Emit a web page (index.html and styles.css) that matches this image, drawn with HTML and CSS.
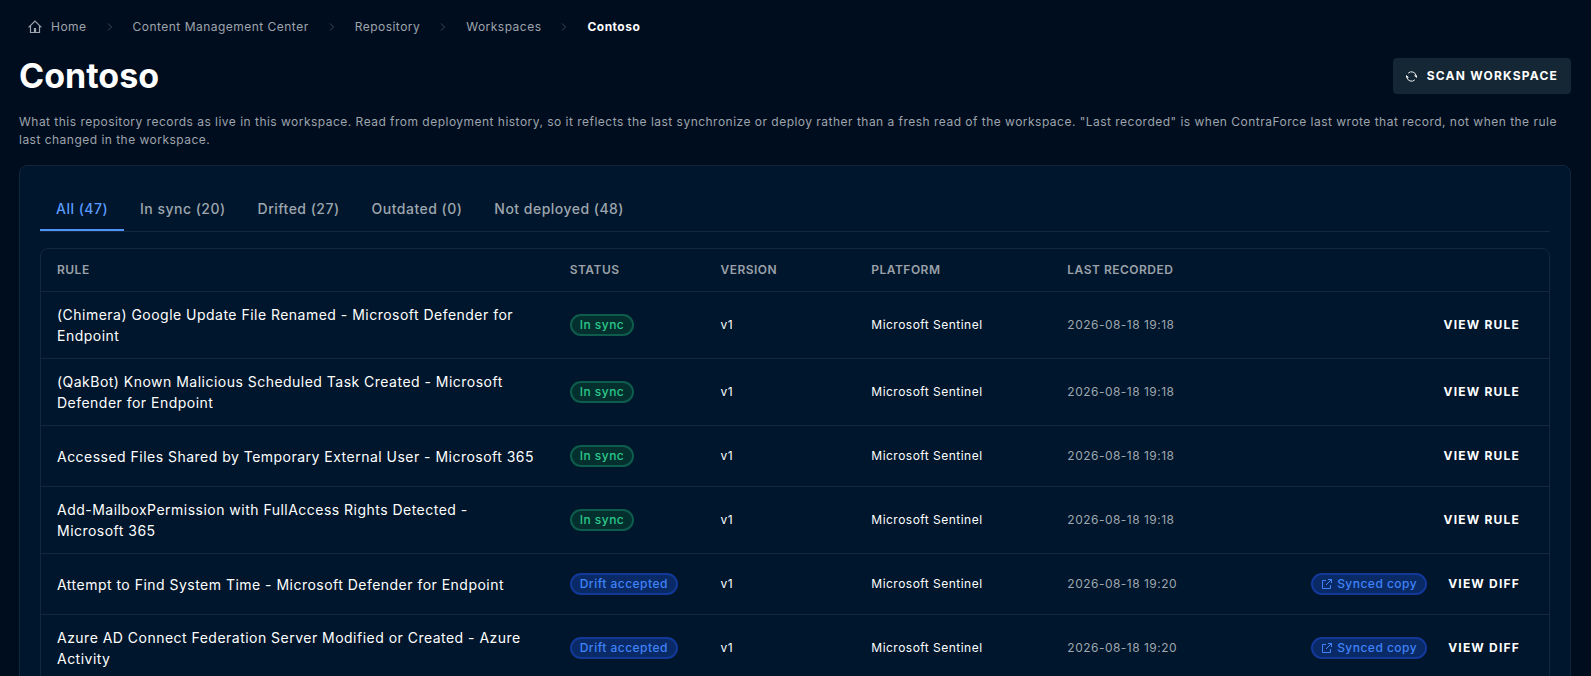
FILE: index.html
```html
<!DOCTYPE html>
<html lang="en">
<head>
    <title>Contoso</title>
    <meta charset="utf-8">
    <link rel="stylesheet" href="styles.css">
</head>
<body>
    <!-- Shared icons -->
    <svg class="sprite" aria-hidden="true">
        <symbol id="chevron" viewBox="0 0 8 10">
            <path d="M2 1.5L5.5 5L2 8.5"/>
        </symbol>
        <symbol id="open" viewBox="0 0 12 12">
            <path d="M5 2.5H1.5V10.5H9.5V7M7 1.5H10.5V5M10.5 1.5L5 7"/>
        </symbol>
    </svg>

    <nav class="breadcrumb" aria-label="Breadcrumb">
        <a href="#" class="home">
            <svg class="home-icon" viewBox="0 0 14 14"><path d="M0.6 7.4L7 1L13.4 7.4M2.5 5.8V12.5H11.5V5.8M6.5 12.5V8.5H7.5V12.5"/></svg>
            Home
        </a>
        <svg class="chevron"><use href="#chevron"/></svg>
        <a href="#">Content Management Center</a>
        <svg class="chevron"><use href="#chevron"/></svg>
        <a href="#">Repository</a>
        <svg class="chevron"><use href="#chevron"/></svg>
        <a href="#">Workspaces</a>
        <svg class="chevron"><use href="#chevron"/></svg>
        <span class="current">Contoso</span>
    </nav>

    <header class="page-head">
        <h1>Contoso</h1>
        <button type="button" class="scan">
            <svg class="scan-icon" viewBox="0 0 12 12">
                <path d="M2.4 2.4A5 5 0 0 1 11 5.6M9.6 9.6A5 5 0 0 1 1 6.4"/>
                <path class="solid" d="M8.6 5H12V7.6ZM3.4 7H0V4.4Z"/>
            </svg>
            SCAN WORKSPACE
        </button>
    </header>

    <p class="intro">What this repository records as live in this workspace. Read from deployment history, so it reflects the last synchronize or deploy rather than a fresh read of the workspace. "Last recorded" is when ContraForce last wrote that record, not when the rule last changed in the workspace.</p>

    <main class="card">
        <div class="tabs" role="tablist">
            <button type="button" class="tab active" role="tab" aria-selected="true">All (47)</button>
            <button type="button" class="tab" role="tab">In sync (20)</button>
            <button type="button" class="tab" role="tab">Drifted (27)</button>
            <button type="button" class="tab" role="tab">Outdated (0)</button>
            <button type="button" class="tab" role="tab">Not deployed (48)</button>
        </div>

        <div class="table-wrap">
            <table>
                <thead>
                    <tr>
                        <th class="col-rule">RULE</th>
                        <th class="col-status">STATUS</th>
                        <th class="col-version">VERSION</th>
                        <th class="col-platform">PLATFORM</th>
                        <th class="col-date">LAST RECORDED</th>
                        <th></th>
                    </tr>
                </thead>
                <tbody>
                    <tr>
                        <td class="rule">(Chimera) Google Update File Renamed - Microsoft Defender for Endpoint</td>
                        <td><span class="badge green">In sync</span></td>
                        <td>v1</td>
                        <td>Microsoft Sentinel</td>
                        <td class="date">2026-08-18 19:18</td>
                        <td><div class="actions"><button type="button" class="view">VIEW RULE</button></div></td>
                    </tr>
                    <tr>
                        <td class="rule">(QakBot) Known Malicious Scheduled Task Created - Microsoft Defender for Endpoint</td>
                        <td><span class="badge green">In sync</span></td>
                        <td>v1</td>
                        <td>Microsoft Sentinel</td>
                        <td class="date">2026-08-18 19:18</td>
                        <td><div class="actions"><button type="button" class="view">VIEW RULE</button></div></td>
                    </tr>
                    <tr>
                        <td class="rule">Accessed Files Shared by Temporary External User - Microsoft 365</td>
                        <td><span class="badge green">In sync</span></td>
                        <td>v1</td>
                        <td>Microsoft Sentinel</td>
                        <td class="date">2026-08-18 19:18</td>
                        <td><div class="actions"><button type="button" class="view">VIEW RULE</button></div></td>
                    </tr>
                    <tr>
                        <td class="rule">Add-MailboxPermission with FullAccess Rights Detected - Microsoft 365</td>
                        <td><span class="badge green">In sync</span></td>
                        <td>v1</td>
                        <td>Microsoft Sentinel</td>
                        <td class="date">2026-08-18 19:18</td>
                        <td><div class="actions"><button type="button" class="view">VIEW RULE</button></div></td>
                    </tr>
                    <tr>
                        <td class="rule">Attempt to Find System Time - Microsoft Defender for Endpoint</td>
                        <td><span class="badge blue">Drift accepted</span></td>
                        <td>v1</td>
                        <td>Microsoft Sentinel</td>
                        <td class="date">2026-08-18 19:20</td>
                        <td><div class="actions"><span class="badge blue"><svg class="open"><use href="#open"/></svg>Synced copy</span><button type="button" class="view">VIEW DIFF</button></div></td>
                    </tr>
                    <tr>
                        <td class="rule">Azure AD Connect Federation Server Modified or Created - Azure Activity</td>
                        <td><span class="badge blue">Drift accepted</span></td>
                        <td>v1</td>
                        <td>Microsoft Sentinel</td>
                        <td class="date">2026-08-18 19:20</td>
                        <td><div class="actions"><span class="badge blue"><svg class="open"><use href="#open"/></svg>Synced copy</span><button type="button" class="view">VIEW DIFF</button></div></td>
                    </tr>
                </tbody>
            </table>
        </div>
    </main>
</body>
</html>
```
FILE: styles.css
```css
* {
    box-sizing: border-box;
}
html {
    background: #000d1f;
    scrollbar-width: none;
}
body {
    margin: 0;
    padding: 18px 20px 20px 19px;
    color: #fff;
    font-family: Inter, "Liberation Sans", sans-serif;
    font-size: 12px;
    line-height: 18px;
    letter-spacing: 0.04em;
}
button {
    font: inherit;
    letter-spacing: inherit;
    color: inherit;
    background: none;
    border: 0;
    cursor: pointer;
}
svg {
    fill: none;
    stroke: currentColor;
}
.sprite {
    display: none;
}

/* Breadcrumb */
.breadcrumb {
    display: flex;
    align-items: center;
    padding-left: 9px;
}
.breadcrumb a {
    color: #9ea4ab;
    text-decoration: none;
}
.breadcrumb .home {
    display: flex;
    align-items: center;
    gap: 9px;
}
.home-icon {
    width: 14px;
    height: 14px;
    stroke-width: 1.2;
}
.chevron {
    width: 8px;
    height: 10px;
    margin: 0 19px;
    color: #3b4755;
}
.current {
    font-weight: 700;
}

/* Title row */
.page-head {
    display: flex;
    justify-content: space-between;
    align-items: center;
    margin-top: 20px;
}
h1 {
    margin: 0;
    font-size: 34px;
    line-height: 40px;
    font-weight: 700;
    letter-spacing: 0;
}
.scan {
    display: flex;
    align-items: center;
    gap: 10px;
    height: 36px;
    padding: 0 13px;
    border-radius: 4px;
    background: #152734;
    font-weight: 700;
    letter-spacing: 0.1em;
}
.scan-icon {
    width: 11px;
    height: 11px;
}
.solid {
    fill: currentColor;
    stroke: none;
}
.intro {
    margin: 17px 0 16px;
    color: #9ea4ab;
}

/* Card and tabs */
.card {
    padding: 20px;
    border: 1px solid #11263a;
    border-radius: 8px;
    background: #00162c;
}
.tabs {
    display: flex;
    margin-bottom: 16px;
    border-bottom: 1px solid #14273b;
}
.tab {
    padding: 12px 16px 10px;
    border-bottom: 2px solid transparent;
    color: #9ea6ae;
    font-size: 14px;
    font-weight: 500;
    line-height: 21px;
}
.tab.active {
    color: #5a9bff;
    border-color: #4c93fa;
}

/* Rules table */
.table-wrap {
    border: 1px solid #14273b;
    border-radius: 8px;
}
table {
    width: 100%;
    table-layout: fixed;
    border-collapse: collapse;
}
th,
td {
    padding: 12px 16px;
    text-align: left;
    vertical-align: middle;
}
th {
    color: #9aa1a9;
    font-weight: 600;
}
td {
    border-top: 1px solid #14273b;
}
.col-rule {
    width: 34%;
}
.col-status,
.col-version {
    width: 10%;
}
.col-platform {
    width: 13%;
}
.col-date {
    width: 13%;
}
.rule {
    font-size: 14px;
    line-height: 21px;
}
.date {
    color: #9ea6ae;
}
.badge {
    display: inline-flex;
    align-items: center;
    height: 22px;
    padding: 0 8px;
    border: 2px solid;
    border-radius: 11px;
    font-weight: 500;
    vertical-align: middle;
}
.green {
    color: #2dc78b;
    background: #03302f;
    border-color: #0d5c4c;
}
.blue {
    color: #3f83f8;
    background: #0a2a66;
    border-color: #12389a;
}
.open {
    width: 12px;
    height: 12px;
    margin-right: 4px;
}
.actions {
    display: flex;
    justify-content: flex-end;
    align-items: center;
    gap: 8px;
}
.view {
    height: 36px;
    padding: 0 13px;
    font-weight: 700;
    letter-spacing: 0.1em;
}
```
